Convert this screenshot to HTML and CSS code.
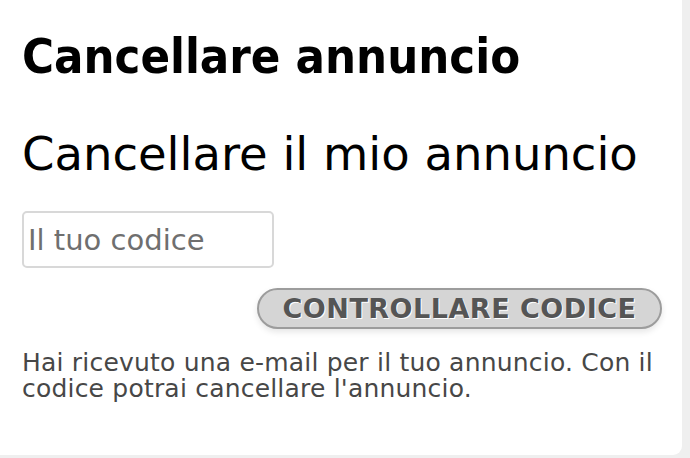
FILE: index.html
```html
<!DOCTYPE html>
<html lang="it">
<head>
    <meta charset="UTF-8">
    <title>Cancellare annuncio</title>
    <link rel="stylesheet" href="styles.css">
</head>
<body>

<div class="page">
    <h1>Cancellare annuncio</h1>

    <form class="delete-form">
        <h2>Cancellare il mio annuncio</h2>
        <input type="text" class="code-input" placeholder="Il tuo codice">
        <div class="actions">
            <button type="button" class="btn-check">Controllare codice</button>
        </div>
        <p class="hint">Hai ricevuto una e-mail per il tuo annuncio. Con il codice potrai cancellare l'annuncio.</p>
    </form>
</div>

</body>
</html>
```

FILE: styles.css
```css
body {
    margin: 0;
    padding: 0;
    background-color: #efefef;
    font-family: "DejaVu Sans", sans-serif;
}

.page {
    display: flex;
    flex-direction: column;
    width: 682px;
    height: 455px;
    padding: 28px 20px 0 22px;
    background-color: #fff;
    border-radius: 0 0 9px 0;
    box-sizing: border-box;
    overflow: hidden;
}

h1 {
    margin: 0;
    font-family: "DejaVu Sans Condensed", "DejaVu Sans", sans-serif;
    font-size: 48.5px;
    font-weight: bold;
    line-height: 56px;
    color: #000;
}

.delete-form {
    display: flex;
    flex-direction: column;
}

h2 {
    margin: 42px 0 0 0;
    font-size: 46.5px;
    font-weight: normal;
    line-height: 56px;
    color: #000;
}

.code-input {
    width: 252px;
    height: 57px;
    margin-top: 29px;
    padding: 0 4px;
    box-sizing: border-box;
    border: 2px solid #d8d8d8;
    border-radius: 5px;
    font-family: inherit;
    font-size: 29px;
    color: #333;
    outline: none;
}

.code-input::placeholder {
    color: #6f6f6f;
}

.actions {
    display: flex;
    justify-content: flex-end;
    margin-top: 20px;
}

.btn-check {
    width: 405px;
    height: 41px;
    padding: 0;
    border: 2px solid #9c9c9c;
    border-radius: 21px;
    background-color: #d5d5d5;
    box-shadow: 0 3px 6px rgba(0, 0, 0, 0.1);
    font-family: inherit;
    font-size: 27px;
    font-weight: bold;
    letter-spacing: 0.5px;
    line-height: 36px;
    text-transform: uppercase;
    color: #555;
    text-shadow: 1px 1px 0 #fff;
}

.hint {
    margin: 21px 0 0 0;
    font-size: 25px;
    letter-spacing: 0.2px;
    line-height: 26px;
    color: #474747;
}
```
